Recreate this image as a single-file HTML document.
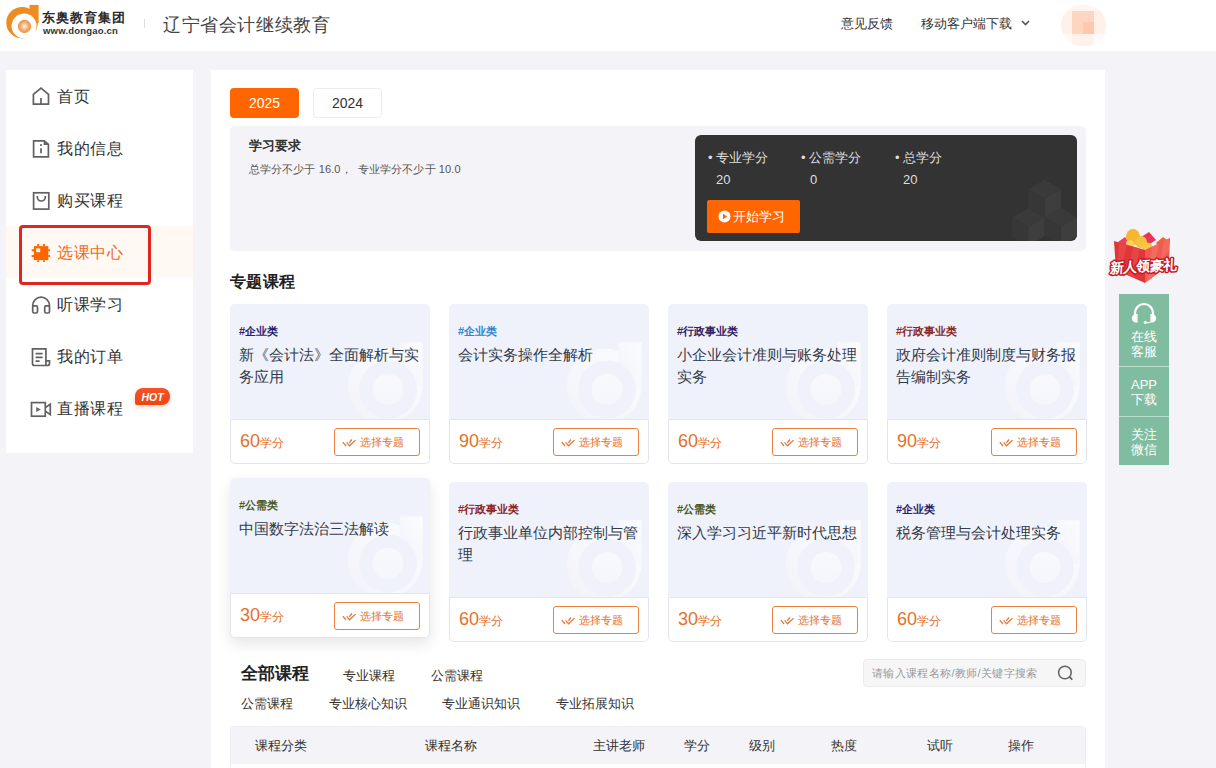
<!DOCTYPE html>
<html><head><meta charset="utf-8">
<style>
*{margin:0;padding:0;box-sizing:border-box}
html,body{width:1216px;height:768px;overflow:hidden}
body{background:#f3f3f8;font-family:"Liberation Sans",sans-serif;color:#333;position:relative}
.abs{position:absolute}
.nw{white-space:nowrap}
#hdr{left:0;top:0;width:1216px;height:51px;background:#fff}
#side{left:6px;top:70px;width:187px;height:383px;background:#fff}
.si{position:absolute;left:0;width:187px;height:52px}
.si .t{position:absolute;left:51px;top:16px;letter-spacing:0.6px;font-size:16px;line-height:22px;color:#333;white-space:nowrap}
.si svg{position:absolute;left:25px;top:17px}
#main{left:211px;top:70px;width:894px;height:720px;background:#fff}
.card{position:absolute;width:200px;height:160px;background:#eff2fa;border-radius:5px;overflow:hidden}
.card .ft{position:absolute;left:0;right:0;bottom:0;height:45px;background:#fff;border:1px solid #e4e5ea;border-radius:0 0 5px 5px}
.card .tag{position:absolute;left:9px;top:20px;font-size:11px;font-weight:bold;line-height:14px;white-space:nowrap}
.card .ttl{position:absolute;left:9px;top:40px;width:186px;font-size:15px;line-height:22px;color:#333a4a}
.card .pts{position:absolute;left:9px;top:11px;color:#e5702a;white-space:nowrap}
.card .pts b{font-weight:normal;font-size:18px}
.card .pts span{font-size:12px;letter-spacing:0px}
.card .btn{position:absolute;left:103px;top:8px;width:86px;height:28px;border:1px solid #e8823e;border-radius:3px;color:#e5702a;font-size:11px;line-height:26px;white-space:nowrap}
.card .btn svg{position:absolute;left:3px;top:5px}
.card .btn span{position:absolute;left:25px;top:0}
.wm{position:absolute;left:117px;top:37px}
</style></head><body>
<svg width="0" height="0" style="position:absolute"><defs><linearGradient id="wmg" x1="1" y1="0" x2="0" y2="1"><stop offset="0" stop-color="#fbfcfe"/><stop offset="0.6" stop-color="#f6f7fc"/><stop offset="1" stop-color="#f1f3fa"/></linearGradient><linearGradient id="wmg2" x1="0" y1="0" x2="0" y2="1"><stop offset="0" stop-color="#f8f9fd"/><stop offset="1" stop-color="#f4f6fc"/></linearGradient></defs></svg>
<div id="hdr" class="abs">
<svg class="abs" style="left:0;top:0" width="42" height="42" viewBox="0 0 42 42">
<defs><radialGradient id="lg" cx="50%" cy="50%" r="50%"><stop offset="0" stop-color="#fff3e6"/><stop offset="0.55" stop-color="#f7b27a"/><stop offset="1" stop-color="#ef8f3c"/></radialGradient></defs>
<circle cx="22.1" cy="22.7" r="15.8" fill="#ef8c21"/>
<rect x="29.5" y="4.9" width="9.1" height="18" fill="#ef8c21"/>
<circle cx="24.1" cy="26" r="12.5" fill="#fff"/>
<circle cx="24.5" cy="26.4" r="6.6" fill="url(#lg)"/>
</svg>
<div class="abs nw" style="left:42px;top:10px;font-size:13px;line-height:16px;font-weight:900;color:#2b2b2b;letter-spacing:1px">东奥教育集团</div>
<div class="abs nw" style="left:43px;top:25px;font-size:9.5px;line-height:12px;font-weight:bold;color:#333;letter-spacing:0.2px">www.dongao.cn</div>
<div class="abs" style="left:144px;top:19px;width:1px;height:9px;background:#ddd"></div>
<div class="abs nw" style="left:163px;top:13px;font-size:18px;letter-spacing:0.6px;line-height:24px;color:#444">辽宁省会计继续教育</div>
<div class="abs nw" style="left:841px;top:15px;font-size:13px;line-height:17px;color:#333">意见反馈</div>
<div class="abs nw" style="left:921px;top:15px;font-size:13px;line-height:17px;color:#333">移动客户端下载</div>
<svg class="abs" style="left:1021px;top:20px" width="9" height="6" viewBox="0 0 9 6"><path d="M1 1 L4.5 4.5 L8 1" fill="none" stroke="#555" stroke-width="1.6"/></svg>
<div class="abs" style="left:1061px;top:5px;width:45px;height:41px;border-radius:21px;overflow:hidden;background:#fff4ef">
<div class="abs" style="left:0;top:6px;width:11px;height:23px;background:#fff0ea"></div>
<div class="abs" style="left:11px;top:6px;width:22px;height:11px;background:#fdd6c2"></div>
<div class="abs" style="left:11px;top:17px;width:11px;height:12px;background:#fdd6c2"></div>
<div class="abs" style="left:22px;top:17px;width:11px;height:12px;background:#fdc8ae"></div>
<div class="abs" style="left:33px;top:6px;width:12px;height:23px;background:#fff0ea"></div>
<div class="abs" style="left:0;top:29px;width:45px;height:12px;background:#fffaf8"></div>
<div class="abs" style="left:11px;top:29px;width:22px;height:12px;background:#fff2eb"></div>
</div>
</div>
</div>
<div id="side" class="abs"><div class="si" style="top:0px"><svg width="26" height="26" viewBox="0 0 26 26" style="left:22px;top:14px"><path d="M5.4 10.4 L13 4.2 L20.5 10.4 V20.2 H5.4 Z M13 14 V20.2" stroke="#616161" stroke-width="1.7" fill="none" stroke-linejoin="miter"/></svg><div class="t" style="color:#333">首页</div></div><div class="si" style="top:52px"><svg width="26" height="26" viewBox="0 0 26 26" style="left:22px;top:14px"><path d="M5.6 4.8 H16.3 L20.4 8.5 V20.9 H5.6 Z" stroke="#616161" stroke-width="1.7" fill="none"/><path d="M15.6 4.8 H16.6 L20.4 8.5 V9 H15.6 Z" fill="#666"/><rect x="12.1" y="8.2" width="1.8" height="1.8" fill="#666"/><path d="M13 12.3 V17.3" stroke="#616161" stroke-width="1.7" fill="none"/></svg><div class="t" style="color:#333">我的信息</div></div><div class="si" style="top:104px"><svg width="26" height="26" viewBox="0 0 26 26" style="left:22px;top:14px"><rect x="5.6" y="4.8" width="15.2" height="16.3" stroke="#616161" stroke-width="1.7" fill="none"/><path d="M9.3 8 V9 A4 4 0 0 0 17.3 9 V8" stroke="#616161" stroke-width="1.7" fill="none"/></svg><div class="t" style="color:#333">购买课程</div></div><div class="si" style="top:156px;background:#fff8f3"><svg width="26" height="26" viewBox="0 0 26 26" style="left:22px;top:14px"><path d="M10.2 4 V6 M15.9 4 V6 M10.2 20.2 V22.1 M15.9 20.2 V22.1 M3.7 10.3 H6 M3.7 15.9 H6 M20.2 10.3 H22.1 M20.2 15.9 H22.1" stroke="#ff6600" stroke-width="2"/><rect x="5.9" y="6.1" width="14.4" height="14" fill="#ff6600"/><rect x="8.1" y="8.3" width="4.1" height="3.9" fill="#fff3e0"/></svg><div class="t" style="color:#f06a1a">选课中心</div></div><div class="si" style="top:208px"><svg width="26" height="26" viewBox="0 0 26 26" style="left:22px;top:14px"><path d="M4.7 14.5 V13.5 A8.4 8.4 0 0 1 21.5 13.5 V14.5" stroke="#616161" stroke-width="1.7" fill="none"/><rect x="4.7" y="13.8" width="4.8" height="7.2" rx="1.4" stroke="#616161" stroke-width="1.7" fill="none"/><rect x="16.7" y="13.8" width="4.8" height="7.2" rx="1.4" stroke="#616161" stroke-width="1.7" fill="none"/></svg><div class="t" style="color:#333">听课学习</div></div><div class="si" style="top:260px"><svg width="26" height="26" viewBox="0 0 26 26" style="left:22px;top:14px"><path d="M17.9 16.8 V4.8 H4.5 V19.5 A2 2 0 0 0 6.5 21.5 H19.5 A2 2 0 0 0 21.5 19.5 V16.8 H17.9 V21.3" stroke="#616161" stroke-width="1.7" fill="none"/><path d="M7.6 9.6 H14.6 M7.6 13.4 H14.6 M7.6 17.1 H11.6" stroke="#616161" stroke-width="1.7" fill="none"/></svg><div class="t" style="color:#333">我的订单</div></div><div class="si" style="top:312px"><svg width="26" height="26" viewBox="0 0 26 26" style="left:22px;top:14px"><rect x="3.5" y="6.6" width="13.8" height="13.6" stroke="#616161" stroke-width="1.7" fill="none"/><path d="M17.3 11.6 L22.3 8.2 V18.7 L17.3 15.1" stroke="#616161" stroke-width="1.7" fill="none"/><path d="M8.2 10.9 L12.9 13.4 L8.2 16 Z" fill="#666"/></svg><div class="t" style="color:#333">直播课程</div></div><div class="abs" style="left:13px;top:155px;width:132px;height:60px;border:3px solid #e0261e;border-radius:4px"></div><div class="abs nw" style="left:129px;top:318px;width:35px;height:17px;background:linear-gradient(180deg,#f45428,#ee4412);border-radius:8px 8px 8px 2px;color:#fff;font-size:10.5px;font-weight:bold;font-style:italic;line-height:18px;text-align:center;box-shadow:0 2px 4px rgba(240,80,30,0.25)">HOT</div></div>
<div id="main" class="abs"></div>
<div class="abs nw" style="left:230px;top:88px;width:69px;height:30px;background:#ff6600;border-radius:4px;color:#fff;font-size:14px;line-height:30px;text-align:center">2025</div>
<div class="abs nw" style="left:313px;top:88px;width:69px;height:30px;background:#fff;border:1px solid #ececef;border-radius:4px;color:#333;font-size:14px;line-height:28px;text-align:center">2024</div>
<div class="abs" style="left:230px;top:126px;width:856px;height:125px;background:#f4f4f8;border-radius:5px"></div>
<div class="abs nw" style="left:249px;top:137px;font-size:13px;line-height:17px;font-weight:bold;color:#333">学习要求</div>
<div class="abs nw" style="left:249px;top:162px;font-size:11px;line-height:15px;color:#555;letter-spacing:0.1px">总学分不少于 16.0，&nbsp; 专业学分不少于 10.0</div>
<div class="abs" style="left:695px;top:135px;width:382px;height:106px;background:#333;border-radius:6px;overflow:hidden">
<svg class="abs" style="left:0;top:0" width="382" height="106" viewBox="695 135 382 106">
<g>
<path d="M1044.6 179.8 L1060.9 189.2 L1044.6 198.6 L1028.3 189.2 Z" fill="#3a3a3a"/>
<path d="M1028.3 189.2 L1044.6 198.6 V217.4 L1028.3 208 Z" fill="#373737"/>
<path d="M1060.9 189.2 L1044.6 198.6 V217.4 L1060.9 208 Z" fill="#3e3e3e"/>
<path d="M1028.3 208 L1044.6 217.4 L1028.3 226.8 L1012 217.4 Z" fill="#3a3a3a"/>
<path d="M1012 217.4 L1028.3 226.8 V245.6 L1012 236.2 Z" fill="#373737"/>
<path d="M1044.6 217.4 L1028.3 226.8 V245.6 L1044.6 236.2 Z" fill="#3e3e3e"/>
<path d="M1060.9 208 L1077.2 217.4 L1060.9 226.8 L1044.6 217.4 Z" fill="#3a3a3a"/>
<path d="M1044.6 217.4 L1060.9 226.8 V245.6 L1044.6 236.2 Z" fill="#373737"/>
<path d="M1077.2 217.4 L1060.9 226.8 V245.6 L1077.2 236.2 Z" fill="#3e3e3e"/>
</g>
</svg>
</div>
<div class="abs nw" style="left:708px;top:149px;font-size:13px;line-height:17px;color:#dedede">•&nbsp;专业学分</div>
<div class="abs nw" style="left:801px;top:149px;font-size:13px;line-height:17px;color:#dedede">•&nbsp;公需学分</div>
<div class="abs nw" style="left:895px;top:149px;font-size:13px;line-height:17px;color:#dedede">•&nbsp;总学分</div>
<div class="abs nw" style="left:716px;top:171px;font-size:13px;line-height:17px;color:#dedede">20</div>
<div class="abs nw" style="left:810px;top:171px;font-size:13px;line-height:17px;color:#dedede">0</div>
<div class="abs nw" style="left:903px;top:171px;font-size:13px;line-height:17px;color:#dedede">20</div>
<div class="abs" style="left:707px;top:200px;width:93px;height:33px;background:#ff6600;border-radius:2px"></div>
<svg class="abs" style="left:718px;top:210px" width="13" height="13" viewBox="0 0 13 13"><circle cx="6.5" cy="6.5" r="6" fill="#fff"/><path d="M5 3.8 L9.2 6.5 L5 9.2 Z" fill="#ff6600"/></svg>
<div class="abs nw" style="left:733px;top:208px;font-size:13px;line-height:17px;color:#fff">开始学习</div>
<div class="abs nw" style="left:230px;top:271px;font-size:16px;letter-spacing:0.4px;line-height:22px;font-weight:bold;color:#222">专题课程</div>

<div class="card" style="left:230px;top:304px;"><svg class="wm" width="200" height="159" viewBox="0 0 200 159" style="position:absolute;left:1px;top:1px"><g fill="url(#wmg)"><circle cx="154.2" cy="81" r="37.4"/><rect x="168.7" y="37.3" width="22.9" height="43.7"/></g><circle cx="157" cy="84.5" r="29" fill="#eff2fa"/><circle cx="157" cy="84.5" r="15.4" fill="url(#wmg2)"/></svg><div class="tag" style="color:#2e1f6e">#企业类</div><div class="ttl">新《会计法》全面解析与实务应用</div><div class="ft"><div class="pts"><b>60</b><span>学分</span></div><div class="btn"><svg width="22" height="18" viewBox="0 0 22 18"><path d="M4.8 8.2 L8 12 M11.3 8.8 L14 5.5 M8.6 8.4 L11.5 11.8 L17.6 6.1" fill="none" stroke="#e2773a" stroke-width="1.3"/></svg><span>选择专题</span></div></div></div>
<div class="card" style="left:449px;top:304px;"><svg class="wm" width="200" height="159" viewBox="0 0 200 159" style="position:absolute;left:1px;top:1px"><g fill="url(#wmg)"><circle cx="154.2" cy="81" r="37.4"/><rect x="168.7" y="37.3" width="22.9" height="43.7"/></g><circle cx="157" cy="84.5" r="29" fill="#eff2fa"/><circle cx="157" cy="84.5" r="15.4" fill="url(#wmg2)"/></svg><div class="tag" style="color:#2f86d0">#企业类</div><div class="ttl">会计实务操作全解析</div><div class="ft"><div class="pts"><b>90</b><span>学分</span></div><div class="btn"><svg width="22" height="18" viewBox="0 0 22 18"><path d="M4.8 8.2 L8 12 M11.3 8.8 L14 5.5 M8.6 8.4 L11.5 11.8 L17.6 6.1" fill="none" stroke="#e2773a" stroke-width="1.3"/></svg><span>选择专题</span></div></div></div>
<div class="card" style="left:668px;top:304px;"><svg class="wm" width="200" height="159" viewBox="0 0 200 159" style="position:absolute;left:1px;top:1px"><g fill="url(#wmg)"><circle cx="154.2" cy="81" r="37.4"/><rect x="168.7" y="37.3" width="22.9" height="43.7"/></g><circle cx="157" cy="84.5" r="29" fill="#eff2fa"/><circle cx="157" cy="84.5" r="15.4" fill="url(#wmg2)"/></svg><div class="tag" style="color:#35205f">#行政事业类</div><div class="ttl">小企业会计准则与账务处理实务</div><div class="ft"><div class="pts"><b>60</b><span>学分</span></div><div class="btn"><svg width="22" height="18" viewBox="0 0 22 18"><path d="M4.8 8.2 L8 12 M11.3 8.8 L14 5.5 M8.6 8.4 L11.5 11.8 L17.6 6.1" fill="none" stroke="#e2773a" stroke-width="1.3"/></svg><span>选择专题</span></div></div></div>
<div class="card" style="left:887px;top:304px;"><svg class="wm" width="200" height="159" viewBox="0 0 200 159" style="position:absolute;left:1px;top:1px"><g fill="url(#wmg)"><circle cx="154.2" cy="81" r="37.4"/><rect x="168.7" y="37.3" width="22.9" height="43.7"/></g><circle cx="157" cy="84.5" r="29" fill="#eff2fa"/><circle cx="157" cy="84.5" r="15.4" fill="url(#wmg2)"/></svg><div class="tag" style="color:#8a2828">#行政事业类</div><div class="ttl">政府会计准则制度与财务报告编制实务</div><div class="ft"><div class="pts"><b>90</b><span>学分</span></div><div class="btn"><svg width="22" height="18" viewBox="0 0 22 18"><path d="M4.8 8.2 L8 12 M11.3 8.8 L14 5.5 M8.6 8.4 L11.5 11.8 L17.6 6.1" fill="none" stroke="#e2773a" stroke-width="1.3"/></svg><span>选择专题</span></div></div></div>
<div class="card" style="left:230px;top:478px;box-shadow:0 6px 14px rgba(0,0,0,0.10);"><svg class="wm" width="200" height="159" viewBox="0 0 200 159" style="position:absolute;left:1px;top:1px"><g fill="url(#wmg)"><circle cx="154.2" cy="81" r="37.4"/><rect x="168.7" y="37.3" width="22.9" height="43.7"/></g><circle cx="157" cy="84.5" r="29" fill="#eff2fa"/><circle cx="157" cy="84.5" r="15.4" fill="url(#wmg2)"/></svg><div class="tag" style="color:#4c5a1c">#公需类</div><div class="ttl">中国数字法治三法解读</div><div class="ft"><div class="pts"><b>30</b><span>学分</span></div><div class="btn"><svg width="22" height="18" viewBox="0 0 22 18"><path d="M4.8 8.2 L8 12 M11.3 8.8 L14 5.5 M8.6 8.4 L11.5 11.8 L17.6 6.1" fill="none" stroke="#e2773a" stroke-width="1.3"/></svg><span>选择专题</span></div></div></div>
<div class="card" style="left:449px;top:482px;"><svg class="wm" width="200" height="159" viewBox="0 0 200 159" style="position:absolute;left:1px;top:1px"><g fill="url(#wmg)"><circle cx="154.2" cy="81" r="37.4"/><rect x="168.7" y="37.3" width="22.9" height="43.7"/></g><circle cx="157" cy="84.5" r="29" fill="#eff2fa"/><circle cx="157" cy="84.5" r="15.4" fill="url(#wmg2)"/></svg><div class="tag" style="color:#8a2424">#行政事业类</div><div class="ttl">行政事业单位内部控制与管理</div><div class="ft"><div class="pts"><b>60</b><span>学分</span></div><div class="btn"><svg width="22" height="18" viewBox="0 0 22 18"><path d="M4.8 8.2 L8 12 M11.3 8.8 L14 5.5 M8.6 8.4 L11.5 11.8 L17.6 6.1" fill="none" stroke="#e2773a" stroke-width="1.3"/></svg><span>选择专题</span></div></div></div>
<div class="card" style="left:668px;top:482px;"><svg class="wm" width="200" height="159" viewBox="0 0 200 159" style="position:absolute;left:1px;top:1px"><g fill="url(#wmg)"><circle cx="154.2" cy="81" r="37.4"/><rect x="168.7" y="37.3" width="22.9" height="43.7"/></g><circle cx="157" cy="84.5" r="29" fill="#eff2fa"/><circle cx="157" cy="84.5" r="15.4" fill="url(#wmg2)"/></svg><div class="tag" style="color:#4a561e">#公需类</div><div class="ttl">深入学习习近平新时代思想</div><div class="ft"><div class="pts"><b>30</b><span>学分</span></div><div class="btn"><svg width="22" height="18" viewBox="0 0 22 18"><path d="M4.8 8.2 L8 12 M11.3 8.8 L14 5.5 M8.6 8.4 L11.5 11.8 L17.6 6.1" fill="none" stroke="#e2773a" stroke-width="1.3"/></svg><span>选择专题</span></div></div></div>
<div class="card" style="left:887px;top:482px;"><svg class="wm" width="200" height="159" viewBox="0 0 200 159" style="position:absolute;left:1px;top:1px"><g fill="url(#wmg)"><circle cx="154.2" cy="81" r="37.4"/><rect x="168.7" y="37.3" width="22.9" height="43.7"/></g><circle cx="157" cy="84.5" r="29" fill="#eff2fa"/><circle cx="157" cy="84.5" r="15.4" fill="url(#wmg2)"/></svg><div class="tag" style="color:#2e1f6e">#企业类</div><div class="ttl">税务管理与会计处理实务</div><div class="ft"><div class="pts"><b>60</b><span>学分</span></div><div class="btn"><svg width="22" height="18" viewBox="0 0 22 18"><path d="M4.8 8.2 L8 12 M11.3 8.8 L14 5.5 M8.6 8.4 L11.5 11.8 L17.6 6.1" fill="none" stroke="#e2773a" stroke-width="1.3"/></svg><span>选择专题</span></div></div></div>
<div class="abs nw" style="left:241px;top:663px;font-size:17px;letter-spacing:0px;line-height:22px;font-weight:bold;color:#222">全部课程</div>
<div class="abs nw" style="left:343px;top:667px;font-size:13px;line-height:17px;color:#333">专业课程</div>
<div class="abs nw" style="left:431px;top:667px;font-size:13px;line-height:17px;color:#333">公需课程</div>
<div class="abs nw" style="left:241px;top:695px;font-size:13px;line-height:17px;color:#333">公需课程</div>
<div class="abs nw" style="left:329px;top:695px;font-size:13px;line-height:17px;color:#333">专业核心知识</div>
<div class="abs nw" style="left:442px;top:695px;font-size:13px;line-height:17px;color:#333">专业通识知识</div>
<div class="abs nw" style="left:556px;top:695px;font-size:13px;line-height:17px;color:#333">专业拓展知识</div>
<div class="abs" style="left:863px;top:659px;width:223px;height:28px;background:#f6f6f7;border:1px solid #ebebed;border-radius:4px"></div>
<div class="abs nw" style="left:872px;top:665px;font-size:11px;letter-spacing:0.35px;line-height:17px;color:#999">请输入课程名称/教师/关键字搜索</div>
<svg class="abs" style="left:1056px;top:665px" width="18" height="16" viewBox="0 0 18 16"><circle cx="8.9" cy="7.5" r="6.3" fill="none" stroke="#666" stroke-width="1.6"/><path d="M13.6 12 L15.8 14.2" stroke="#666" stroke-width="1.8" stroke-linecap="round"/></svg>
<div class="abs" style="left:230px;top:726px;width:856px;height:60px;background:#fff;border:1px solid #eeeef2;border-radius:4px;overflow:hidden"><div class="abs" style="left:0;top:0;width:856px;height:37px;background:#f4f4f8"></div></div>
<div class="abs nw" style="left:255px;top:737px;font-size:13px;line-height:17px;color:#333">课程分类</div>
<div class="abs nw" style="left:425px;top:737px;font-size:13px;line-height:17px;color:#333">课程名称</div>
<div class="abs nw" style="left:593px;top:737px;font-size:13px;line-height:17px;color:#333">主讲老师</div>
<div class="abs nw" style="left:684px;top:737px;font-size:13px;line-height:17px;color:#333">学分</div>
<div class="abs nw" style="left:749px;top:737px;font-size:13px;line-height:17px;color:#333">级别</div>
<div class="abs nw" style="left:831px;top:737px;font-size:13px;line-height:17px;color:#333">热度</div>
<div class="abs nw" style="left:927px;top:737px;font-size:13px;line-height:17px;color:#333">试听</div>
<div class="abs nw" style="left:1008px;top:737px;font-size:13px;line-height:17px;color:#333">操作</div>
<div class="abs" style="left:1119px;top:294px;width:50px;height:171px;background:#80bca0"></div>
<div class="abs" style="left:1119px;top:366px;width:50px;height:1px;background:#b9dccb"></div>
<div class="abs" style="left:1119px;top:416px;width:50px;height:1px;background:#b9dccb"></div>
<svg class="abs" style="left:1119px;top:294px" width="50" height="40" viewBox="0 0 50 40">
<path d="M16 21 V19 A9 9 0 0 1 34 19 V21" fill="none" stroke="#fff" stroke-width="2.2"/>
<path d="M18.6 20 V28.4 H17.2 A4.3 4.2 0 0 1 12.8 24.2 A4.3 4.2 0 0 1 17.2 20 Z" fill="#fff"/>
<path d="M31.4 20 V28.4 H32.8 A4.3 4.2 0 0 0 37.2 24.2 A4.3 4.2 0 0 0 32.8 20 Z" fill="#fff"/>
<path d="M17.2 20.6 V27.8 M32.8 20.6 V27.8" stroke="#d8ece2" stroke-width="0.6"/>
<path d="M31.6 27.6 Q31.6 28.6 30 28.6 H27" fill="none" stroke="#e8f4ee" stroke-width="1.1"/>
<circle cx="26.3" cy="28.5" r="1.7" fill="#e8f4ee"/>
</svg>
<div class="abs" style="left:1119px;top:329px;width:50px;font-size:13px;line-height:15px;color:#fff;text-align:center">在线<br>客服</div>
<div class="abs" style="left:1119px;top:377px;width:50px;font-size:13px;line-height:15px;color:#fff;text-align:center">APP<br>下载</div>
<div class="abs" style="left:1119px;top:427px;width:50px;font-size:13px;line-height:15px;color:#fff;text-align:center">关注<br>微信</div>
<svg class="abs" style="left:1104px;top:224px" width="80" height="64" viewBox="1104 224 80 64">
<path d="M1118 242 L1125 237 L1131 244 L1123 248 Z" fill="#ec3d66"/>
<path d="M1141 237 L1149 232 L1156 240 L1148 245 Z" fill="#e8345a"/>
<path d="M1156 243 L1163 237 L1170 242 L1162 250 Z" fill="#f2642a"/>
<ellipse cx="1133" cy="237" rx="7" ry="8" fill="#f8b530"/>
<ellipse cx="1141" cy="242" rx="6" ry="6" fill="#f5c23e"/>
<ellipse cx="1147" cy="247" rx="5.5" ry="4.5" fill="#f7c848"/>
<circle cx="1130" cy="244" r="4" fill="#fbd25a"/>
<path d="M1114 241 L1145 250 L1145 283 L1116 270 Z" fill="#e0353a"/>
<path d="M1145 250 L1170 238 L1169 265 L1145 283 Z" fill="#f05a50"/>
<path d="M1119 242.5 L1127 244.8 L1121 271.5 L1117 270 Z M1133 246.5 L1140 248.5 L1134 278 L1127 275 Z" fill="#ea4a4a" opacity="0.75"/>
<path d="M1152 247 L1159 243.5 L1152 279 L1147 281 Z M1164 240.5 L1169.5 238 L1169 250 L1160 262 Z" fill="#f67468" opacity="0.6"/>
<g transform="translate(1143 271) rotate(-3) skewX(-6)"><text x="0" y="0" text-anchor="middle" font-size="13.8" font-weight="900" fill="#fff" stroke="#c41a26" stroke-width="3" stroke-linejoin="round" paint-order="stroke" letter-spacing="-0.8">新人领豪礼</text></g>
</svg>
</body></html>
